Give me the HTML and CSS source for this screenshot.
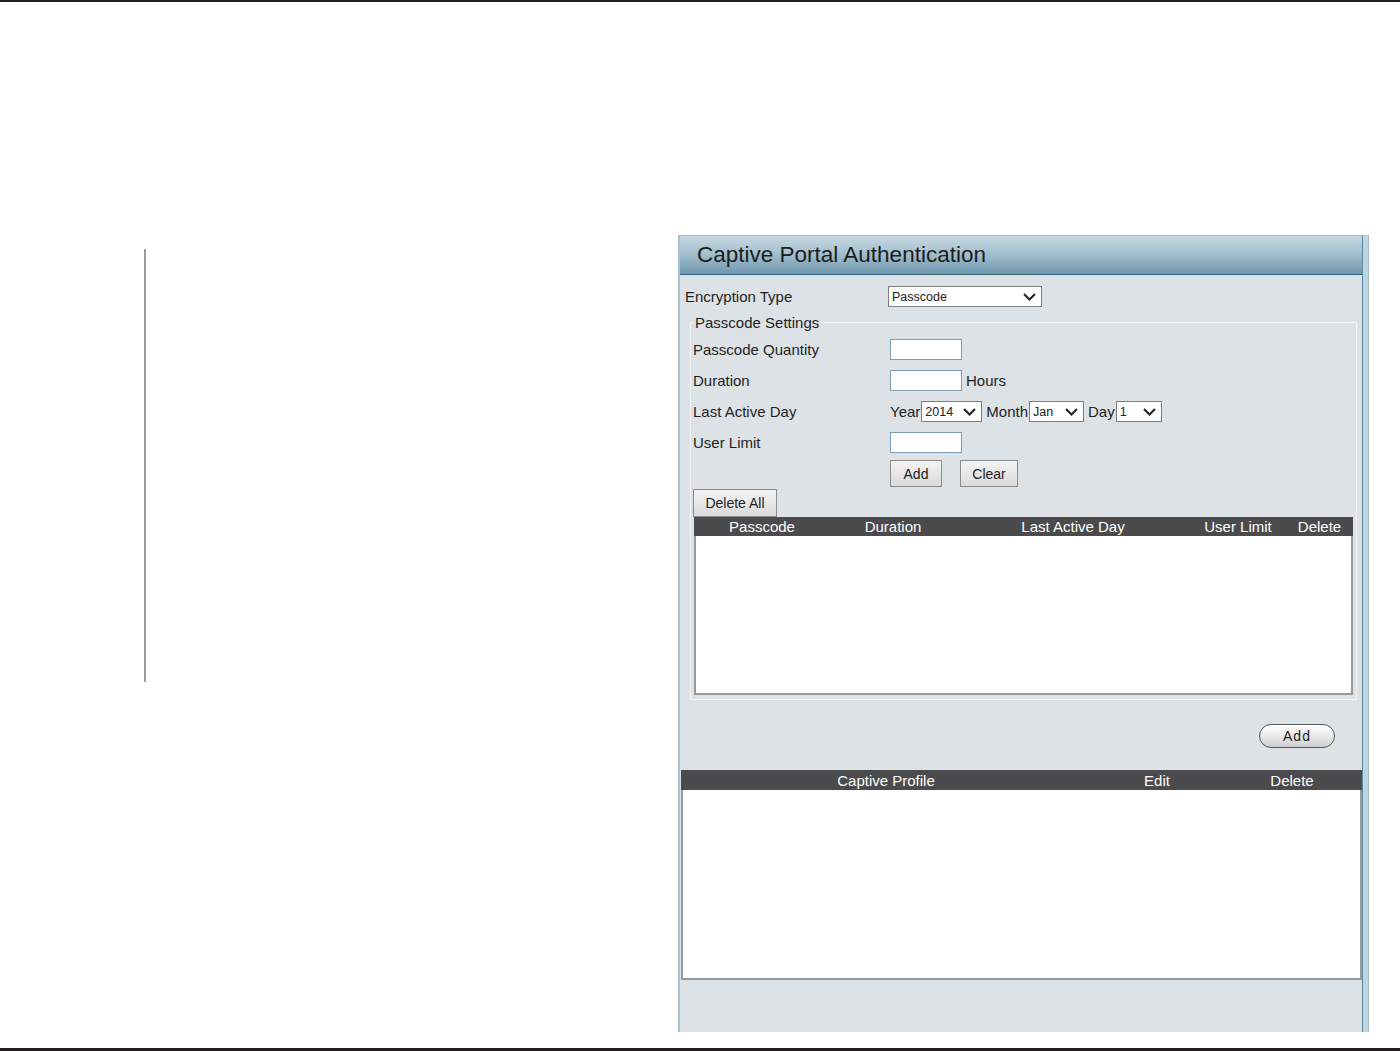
FILE: index.html
```html
<!DOCTYPE html>
<html>
<head>
<meta charset="utf-8">
<title>Captive Portal Authentication</title>
<link rel="stylesheet" href="styles.css">
</head>
<body>
<div class="top-rule"></div>
<div class="content">
  <div class="sideline"></div>
  <div class="panel">
    <div class="panel-main">
      <div class="panel-header">Captive Portal Authentication</div>
      <div class="panel-body">
        <div class="enc-row">
          <span class="enc-label">Encryption Type</span>
          <div class="select sel-enc"><span>Passcode</span><svg class="chev" width="13" height="8" viewBox="0 0 13 8"><polyline points="1,1 6.5,6.5 12,1" fill="none" stroke="#222" stroke-width="2"/></svg></div>
        </div>
        <fieldset class="settings">
          <legend>Passcode Settings</legend>
          <div class="form-row"><span class="lbl">Passcode Quantity</span><div class="ctl"><div class="input"></div></div></div>
          <div class="form-row"><span class="lbl">Duration</span><div class="ctl"><div class="input"></div><span class="txt">Hours</span></div></div>
          <div class="form-row"><span class="lbl">Last Active Day</span><div class="ctl">
            <span class="txt-tight">Year</span>
            <div class="select sel-year"><span>2014</span><svg class="chev" width="13" height="8" viewBox="0 0 13 8"><polyline points="1,1 6.5,6.5 12,1" fill="none" stroke="#222" stroke-width="2"/></svg></div>
            <span class="txt">Month</span>
            <div class="select sel-month"><span>Jan</span><svg class="chev" width="13" height="8" viewBox="0 0 13 8"><polyline points="1,1 6.5,6.5 12,1" fill="none" stroke="#222" stroke-width="2"/></svg></div>
            <span class="txt">Day</span>
            <div class="select sel-day"><span>1</span><svg class="chev" width="13" height="8" viewBox="0 0 13 8"><polyline points="1,1 6.5,6.5 12,1" fill="none" stroke="#222" stroke-width="2"/></svg></div>
          </div></div>
          <div class="form-row"><span class="lbl">User Limit</span><div class="ctl"><div class="input"></div></div></div>
          <div class="form-row"><span class="lbl"></span><div class="ctl btns"><div class="btn btn-add">Add</div><div class="btn btn-clear">Clear</div></div></div>
          <div class="btn btn-delall">Delete All</div>
          <div class="table pass-table">
            <div class="thead pass-cols">
              <span>Passcode</span><span>Duration</span><span>Last Active Day</span><span>User Limit</span><span>Delete</span>
            </div>
            <div class="tbody pass-body"></div>
          </div>
        </fieldset>
        <div class="add-row"><div class="pill">Add</div></div>
        <div class="table prof-table">
          <div class="thead prof-cols">
            <span>Captive Profile</span><span>Edit</span><span>Delete</span>
          </div>
          <div class="tbody prof-body"></div>
        </div>
      </div>
    </div>
    <div class="panel-strip"></div>
  </div>
</div>
<div class="bottom-rule"></div>
</body>
</html>
```
FILE: styles.css
```css
* { box-sizing: border-box; }
html, body { margin: 0; padding: 0; background: #fff; }
body {
  width: 1400px;
  height: 1051px;
  overflow: hidden;
  font-family: "Liberation Sans", Arial, sans-serif;
  color: #1f1f1f;
}
.top-rule { height: 2px; background: #231f20; }
.bottom-rule { height: 3px; background: #231f20; }
.content {
  height: 1046px;
  display: flex;
  align-items: flex-start;
}
.sideline {
  margin-left: 144px;
  margin-top: 247px;
  width: 2px;
  height: 433px;
  background: #9c9c9c;
}
.panel {
  margin-left: 532px;
  margin-top: 233px;
  height: 797px;
  width: 691px;
  display: flex;
}
.panel-main {
  width: 684px;
  height: 100%;
  border-left: 2px solid #a3c0cf;
  background: #dce2e5;
  display: flex;
  flex-direction: column;
}
.panel-strip {
  width: 7px;
  height: 100%;
  background: #bcd6e4;
  border-left: 1px solid #5d8aa2;
  border-right: 1px solid #aab6bd;
}
.panel-header {
  height: 40px;
  background: linear-gradient(#c6d8e1, #a9c3d1 40%, #6f98af);
  border-bottom: 1px solid #32617a;
  border-top: 1px solid #9fbccb;
  font-size: 22.5px;
  line-height: 38px;
  padding-left: 17px;
  color: #1c1c1c;
}
.panel-body {
  flex: 1;
  padding: 11px 0 0 0;
  display: flex;
  flex-direction: column;
}
.enc-row {
  display: flex;
  align-items: center;
  height: 21px;
  padding-left: 5px;
  font-size: 15px;
}
.enc-label { width: 203px; }
.select {
  display: flex;
  align-items: center;
  justify-content: space-between;
  height: 21px;
  background: #fff;
  border: 1px solid #7e7e7e;
  font-size: 12.5px;
  padding: 0 5px 0 3px;
  color: #222;
}
.sel-enc { width: 154px; }
.sel-year { width: 61px; }
.sel-month { width: 55px; }
.sel-day { width: 46px; }
.chev { display: block; }
.settings {
  margin: 7px 5px 0 10px;
  padding: 0 2px 3px 2px;
  border: 1px solid #f1f4f5;
  height: 386px;
}
.settings legend {
  padding: 0 2px;
  margin-left: 0;
  font-size: 15px;
  line-height: 17px;
}
.form-row {
  display: flex;
  align-items: center;
  height: 31px;
  font-size: 15px;
}
.form-row:first-of-type { margin-top: 3px; }
.lbl { width: 197px; flex: none; }
.ctl { display: flex; align-items: center; }
.input {
  width: 72px;
  height: 21px;
  background: #fff;
  border: 1px solid #7f9eb2;
}
.txt { margin: 0 1px 0 4px; }
.txt-tight { margin-right: 1px; }
.btns { gap: 18px; }
.btn {
  height: 27px;
  border: 1px solid #8b8b8b;
  background: linear-gradient(#f4f4f4, #dadada);
  font-size: 14px;
  display: flex;
  align-items: center;
  justify-content: center;
  color: #222;
}
.btn-add { width: 52px; }
.btn-clear { width: 58px; }
.btn-delall {
  width: 84px;
  height: 28px;
  margin-left: 0;
}
.table { display: flex; flex-direction: column; }
.pass-table { margin: 0 1px 0 1px; }
.thead {
  background: #4b4b4d;
  color: #fff;
  font-size: 15px;
  display: grid;
  align-items: center;
}
.thead span { text-align: center; }
.pass-cols {
  height: 19px;
  grid-template-columns: 136px 126px 234px 96px 67px;
}
.tbody {
  background: #fff;
  border: 2px solid #9a9a9a;
  border-top: none;
}
.pass-body { height: 159px; }
.add-row {
  display: flex;
  justify-content: flex-end;
  padding-right: 27px;
  margin-top: 24px;
}
.pill {
  width: 76px;
  height: 24px;
  border: 1px solid #555;
  border-radius: 12px;
  background: linear-gradient(#ffffff, #e4e4e4 60%, #cfcfcf);
  font-size: 14px;
  letter-spacing: 1px;
  display: flex;
  align-items: center;
  justify-content: center;
  color: #222;
}
.prof-table { margin: 22px 0 0 1px; }
.prof-cols {
  height: 20px;
  grid-template-columns: 410px 132px 138px;
}
.prof-body { height: 190px; }
```
